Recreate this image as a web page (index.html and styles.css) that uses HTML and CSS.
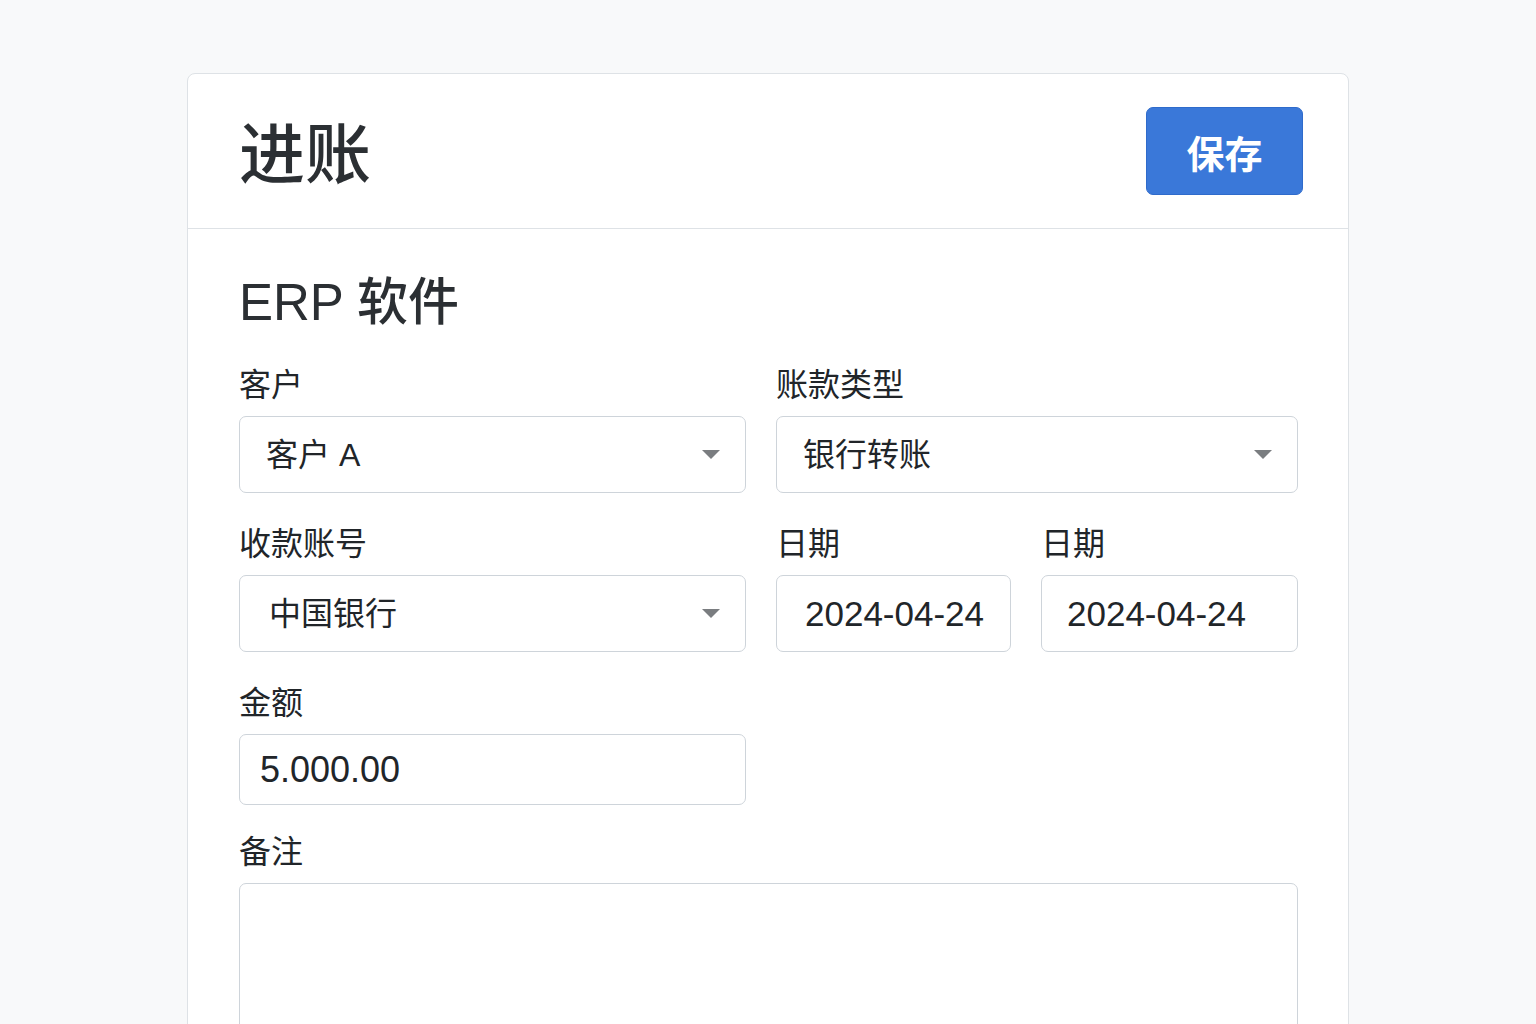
FILE: index.html
```html
<!DOCTYPE html>
<html lang="zh-CN">
<head>
    <meta charset="UTF-8">
    <meta name="viewport" content="width=device-width, initial-scale=1.0">
    <title>进账</title>
    <link rel="stylesheet" href="styles.css">
</head>
<body>
    <div class="card">
        <div class="card-header">
            <h1 class="page-title">进账</h1>
            <button type="button" class="btn-save">保存</button>
        </div>

        <div class="card-body">
            <h2 class="section-title">ERP 软件</h2>

            <form class="form-grid">
                <div class="form-group">
                    <label>客户</label>
                    <div class="select-wrap">
                        <select>
                            <option>客户 A</option>
                            <option>客户 B</option>
                        </select>
                    </div>
                </div>

                <div class="form-group span-2">
                    <label>账款类型</label>
                    <div class="select-wrap">
                        <select>
                            <option>银行转账</option>
                            <option>现金</option>
                        </select>
                    </div>
                </div>

                <div class="form-group">
                    <label>收款账号</label>
                    <div class="select-wrap">
                        <select class="pad-wide">
                            <option>中国银行</option>
                            <option>工商银行</option>
                        </select>
                    </div>
                </div>

                <div class="form-group">
                    <label>日期</label>
                    <input type="text" class="date-input" value="2024-04-24">
                </div>

                <div class="form-group">
                    <label>日期</label>
                    <input type="text" class="date-input narrow" value="2024-04-24">
                </div>

                <div class="form-group">
                    <label>金额</label>
                    <input type="text" class="amount-input" value="5.000.00">
                </div>

                <div class="form-group span-3 note">
                    <label>备注</label>
                    <textarea></textarea>
                </div>
            </form>
        </div>
    </div>
</body>
</html>
```

FILE: styles.css
```css
body {
    font-family: "Liberation Sans", "Noto Sans CJK SC", sans-serif;
    background: #f8f9fa;
    color: #212529;
    margin: 0;
    padding: 73px 0 0;
}

.card {
    width: 1160px;
    margin: 0 auto;
    background: #fff;
    border: 1px solid #dee2e6;
    border-radius: 8px;
}

.card-header {
    display: flex;
    align-items: center;
    justify-content: space-between;
    padding: 33px 45px 33px 51px;
    border-bottom: 1px solid #dee2e6;
}

.page-title {
    margin: 8px 0 0;
    font-size: 66px;
    line-height: 80px;
    font-weight: 500;
    color: #2b2f33;
}

.btn-save {
    width: 157px;
    height: 88px;
    background: #3a78d9;
    border: 1px solid #2f6bcb;
    border-radius: 7px;
    color: #fff;
    font-family: inherit;
    font-size: 38px;
    font-weight: 700;
    cursor: pointer;
}

.card-body {
    padding: 44px 50px 0 51px;
}

.section-title {
    margin: 0 0 32px;
    font-size: 51px;
    line-height: 60px;
    font-weight: 500;
    color: #2b2f33;
}

.form-grid {
    display: grid;
    grid-template-columns: 507px 235px 1fr;
    column-gap: 30px;
    row-gap: 31px;
}

.span-2 {
    grid-column: span 2;
}

.span-3 {
    grid-column: span 3;
}

.note {
    margin-top: -4px;
}

.form-group label {
    display: block;
    font-size: 32px;
    line-height: 40px;
    margin-bottom: 11px;
}

select, input, textarea {
    display: block;
    width: 100%;
    box-sizing: border-box;
    border: 1px solid #ced4da;
    border-radius: 7px;
    background: #fff;
    color: #212529;
    font-family: inherit;
}

.select-wrap {
    position: relative;
}

.select-wrap::after {
    content: "";
    position: absolute;
    right: 26px;
    top: 34px;
    border-left: 9px solid transparent;
    border-right: 9px solid transparent;
    border-top: 9px solid #7a7d80;
    pointer-events: none;
}

select {
    -webkit-appearance: none;
    appearance: none;
    height: 77px;
    padding: 0 60px 0 26px;
    font-size: 32px;
}

select.pad-wide {
    padding-left: 29px;
}

.date-input {
    height: 77px;
    padding: 0 20px 0 28px;
    font-size: 35px;
}

.date-input.narrow {
    padding-left: 25px;
}

.amount-input {
    height: 71px;
    padding: 0 20px;
    font-size: 36px;
}

textarea {
    height: 200px;
    resize: none;
}
```
